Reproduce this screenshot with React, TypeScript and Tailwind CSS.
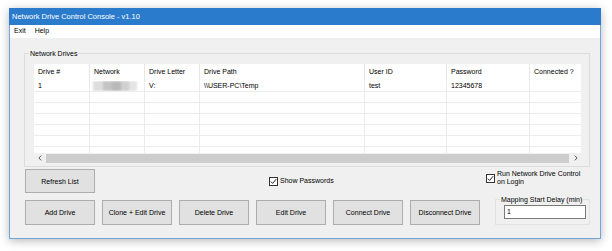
const columns = ["Drive #", "Network", "Drive Letter", "Drive Path", "User ID", "Password", "Connected ?"];
const gridCols = "grid grid-cols-[56px_55px_55px_165px_82px_83px_51px]";

const Check = () => (
  <span className="w-[9px] h-[9px] shrink-0 border border-[#333] bg-white flex items-center justify-center">
    <svg width="7" height="7" viewBox="0 0 7 7">
      <path d="M0.8 3.6 L2.6 5.4 L6.2 1.2" fill="none" stroke="#222" strokeWidth="1" />
    </svg>
  </span>
);

const Arrow = ({ dir }: { dir: "l" | "r" }) => (
  <span className="w-[11px] h-[10px] flex items-center justify-center">
    <svg width="4" height="6" viewBox="0 0 4 6">
      <path d={dir === "l" ? "M3.2 0.6 L0.9 3 L3.2 5.4" : "M0.8 0.6 L3.1 3 L0.8 5.4"} fill="none" stroke="#555" strokeWidth="1" />
    </svg>
  </span>
);

const Btn = ({ label, tall = 25 }: { label: string; tall?: number }) => (
  <button
    className={`w-[70px] ${tall === 24 ? "h-[24px]" : "h-[25px]"} bg-[#e1e1e1] border border-[#adadad] text-[7px] text-black leading-none`}
  >
    {label}
  </button>
);

const App = () => {
  const blank = ["", "", "", "", "", "", ""];
  const rows = [["1", "", "V:", "\\\\USER-PC\\Temp", "test", "12345678", ""], blank, blank, blank, blank, blank, blank];

  return (
    <div className="w-[612px] h-[251px] bg-white pt-[8px] pl-[9px] font-['Liberation_Sans',Arial,sans-serif] text-black">
      <div className="w-[592px] h-[231px] flex flex-col border-x border-b border-[#6ea5de] shadow-[0_2px_9px_rgba(0,0,0,0.28)]">
        {/* title bar */}
        <div className="h-[17px] -mx-[1px] bg-[#2b7bcd] flex items-center pl-[3px] text-white text-[7.5px]">
          Network Drive Control Console - v1.10
        </div>

        {/* menu */}
        <div className="h-[13px] bg-white flex items-center gap-[9px] pl-[4px] text-[7px]">
          <span>Exit</span>
          <span>Help</span>
        </div>

        {/* client */}
        <div className="flex-1 bg-[#f0f0f0] flex flex-col">
          <div className="relative mt-[15px] ml-[14px] w-[566px] h-[114px] border border-[#dcdcdc] pt-[10px] pl-[9px]">
            <span className="absolute -top-[5px] left-[4px] bg-[#f0f0f0] px-[1px] text-[7px] leading-[9px]">
              Network Drives
            </span>

            <div className="w-[547px] h-[99px] flex flex-col bg-white text-[7px]">
              <div className={`${gridCols} h-[17px]`}>
                {columns.map((c, i) => (
                  <div
                    key={c}
                    className={`flex items-center pl-[4px] whitespace-nowrap overflow-hidden ${i < 6 ? "border-r border-[#e6e6e6]" : ""}`}
                  >
                    {c}
                  </div>
                ))}
              </div>

              <div className="h-[72px] overflow-hidden">
                {rows.map((r, ri) => (
                  <div key={ri} className={`${gridCols} h-[11px] border-b border-[#ececec]`}>
                    {r.map((v, ci) => (
                      <div
                        key={ci}
                        className={`flex items-center pl-[4px] whitespace-nowrap overflow-hidden ${ci < 6 ? "border-r border-[#ececec]" : ""}`}
                      >
                        {ri === 0 && ci === 1 ? (
                          <div className="flex h-[10px] -ml-[1px] blur-[1.2px]">
                            <span className="w-[10px] bg-[#dedede]" />
                            <span className="w-[9px] bg-[#c4c4c4]" />
                            <span className="w-[9px] bg-[#b9b9b9]" />
                            <span className="w-[8px] bg-[#cfcfcf]" />
                            <span className="w-[8px] bg-[#e4e4e4]" />
                          </div>
                        ) : (
                          v
                        )}
                      </div>
                    ))}
                  </div>
                ))}
              </div>

              {/* horizontal scrollbar */}
              <div className="h-[10px] bg-[#f0f0f0] flex items-center">
                <Arrow dir="l" />
                <div className="flex-1 h-[9px] bg-[#cdcdcd] mx-[1px]" />
                <Arrow dir="r" />
              </div>
            </div>
          </div>

          {/* controls */}
          <div className="flex mt-[2px] pl-[15px] pr-[10px]">
            <div className="flex-1 flex flex-col">
              <div className="flex items-center">
                <Btn label="Refresh List" tall={24} />
                <label className="ml-[174px] flex items-center gap-[2px] text-[7px]">
                  <Check />
                  Show Passwords
                </label>
              </div>
              <div className="flex gap-[7px] mt-[7px]">
                <Btn label="Add Drive" />
                <Btn label="Clone + Edit Drive" />
                <Btn label="Delete Drive" />
                <Btn label="Edit Drive" />
                <Btn label="Connect Drive" />
                <Btn label="Disconnect Drive" />
              </div>
            </div>

            <div className="w-[105px] flex flex-col">
              <label className="mt-[1px] ml-[1px] flex items-center gap-[2px] text-[7px] leading-[8px]">
                <Check />
                <span>
                  Run Network Drive Control
                  <br />
                  on Login
                </span>
              </label>
              <div className="relative mt-[13px] ml-[10px] w-[95px] h-[26px] border border-[#e2e2e2] pt-[5px] pl-[8px]">
                <span className="absolute -top-[5px] left-[4px] bg-[#f0f0f0] px-[1px] text-[7px] leading-[9px]">
                  Mapping Start Delay (min)
                </span>
                <div className="w-[82px] h-[14px] bg-white border border-[#7a7a7a] flex items-center pl-[2px] text-[7px]">
                  1
                </div>
              </div>
            </div>
          </div>
        </div>
      </div>
    </div>
  );
};

export default App;
